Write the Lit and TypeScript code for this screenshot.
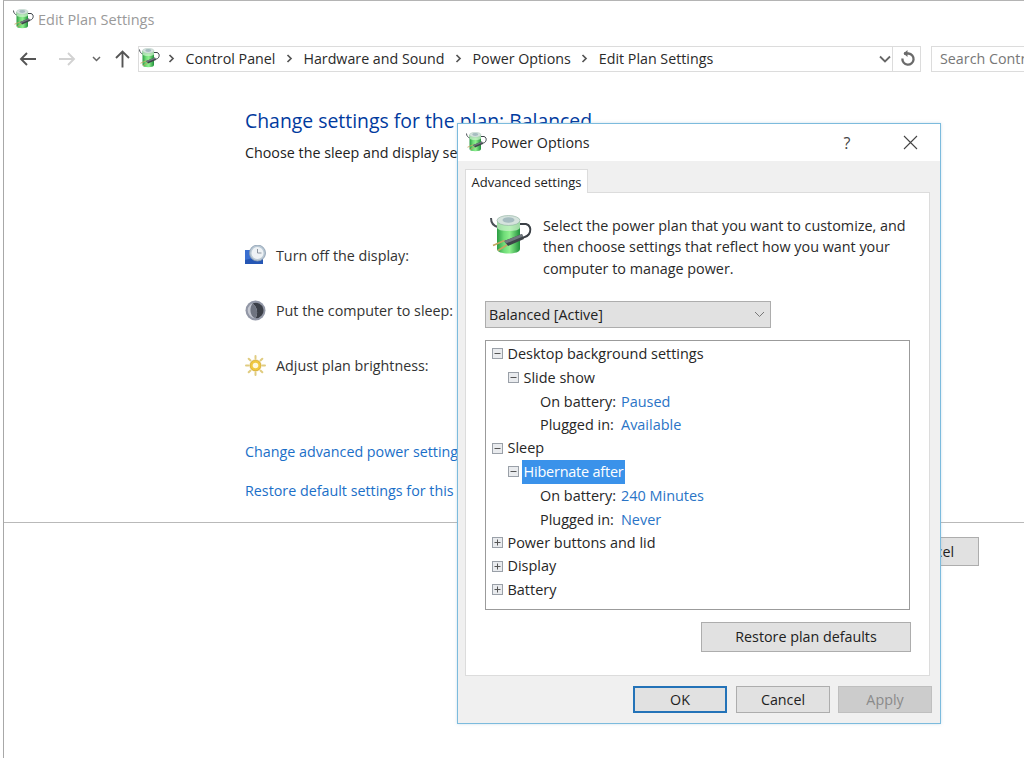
import { LitElement, html, css } from "lit";
import { customElement } from "lit/decorators.js";

let uid = 0;
const battery = (size: number) => {
  const id = `g${uid++}`;
  return html`<svg width=${size} height=${size} viewBox="0 0 42 42" class="ico">
    <defs>
      <linearGradient id=${id} x1="0" x2="1" y1="0" y2="0">
        <stop offset="0" stop-color="#2a9c42"/><stop offset=".3" stop-color="#6fdc78"/>
        <stop offset=".55" stop-color="#8ff08e"/><stop offset="1" stop-color="#1f8f3a"/>
      </linearGradient>
    </defs>
    <path d="M1 3C1 8 4 11 8 12" fill="none" stroke="#4a5056" stroke-width="2"/>
    <path d="M7 6v28c0 3 5 4.500 11.500 4.500S30 37 30 34V6z" fill="url(#${id})"/>
    <path d="M7 6v6c0 3 5 4 11.500 4S30 15 30 12V6z" fill="#c8f0c8" opacity=".75"/>
    <ellipse cx="18.500" cy="5.500" rx="11.500" ry="5" fill="#d5e3dd" stroke="#8fb0a0" stroke-width=".6"/>
    <ellipse cx="18.500" cy="5" rx="6" ry="2.800" fill="#a6bcc0"/>
    <path d="M30 9H36C40 10 41 14 40 17C39 21 36 22 31 23" fill="none" stroke="#3a4046" stroke-width="2"/>
    <path d="M32 19L34 24L18 31L14 26z" fill="#3e4449"/>
    <path d="M32 19L33 21.500L16 28.500L14 26z" fill="#70787e"/>
    <path d="M14.500 25.500L3 30.500M17 30L8 35.500" stroke="#c4a763" stroke-width="1.700"/>
  </svg>`;
};

const clock = html`<svg width="21" height="21" viewBox="0 0 21 21" class="ico">
  <path d="M0 5h18v14H0z" fill="#3a6fd0"/>
  <path d="M0 15L8 13L14 14L18 12V19H0z" fill="#2556b4"/>
  <circle cx="12.500" cy="8" r="8" fill="#b9c8d4" stroke="#8b9db0" stroke-width=".8"/>
  <circle cx="12.500" cy="8" r="6" fill="#eef2f5"/>
  <path d="M12.500 4v4h4" fill="none" stroke="#8c95a0" stroke-width="1"/>
</svg>`;
const moon = html`<svg width="21" height="21" viewBox="0 0 21 21" class="ico">
  <circle cx="10.500" cy="10.500" r="10" fill="#9297a6"/>
  <circle cx="10.500" cy="10.500" r="7.800" fill="#c4c7d0"/>
  <path d="M7.500 3.400a7.800 7.800 0 1 1 3 14.900C13 14 13 8 7.500 3.400z" fill="#3b3f47"/>
  <path d="M7.500 3.400C13 8 13 14 10.500 18.300C5 17 4 8 7.500 3.400z" fill="#6f7480"/>
</svg>`;
const sun = html`<svg width="21" height="21" viewBox="0 0 21 21" class="ico">
  <g stroke="#e0cc80" stroke-width="2" stroke-linecap="round">
    <path d="M10.500 1v2.500M10.500 17.500v2.500M1 10.500h2.500M17.500 10.500h2.500M3.700 3.700l1.800 1.800M15.500 15.500l1.800 1.800M3.700 17.300l1.800-1.800M15.500 5.500l1.800-1.800"/>
  </g>
  <circle cx="10.500" cy="10.500" r="5.500" fill="#f0c840" stroke="#cfa52e" stroke-width=".8"/>
  <circle cx="10.500" cy="10.500" r="2.800" fill="#fff8dc"/>
</svg>`;

const chev = html`<svg width="7" height="9" viewBox="0 0 7 9" class="crumb-sep"><path d="M1.500 1l3.500 3.500L1.500 8" fill="none" stroke="#555" stroke-width="1.700"/></svg>`;

type Row = { lvl: number; label?: string; value?: string; box?: "min" | "plus"; sel?: boolean };
const rows: Row[] = [
  { lvl: 0, box: "min", label: "Desktop background settings" },
  { lvl: 1, box: "min", label: "Slide show" },
  { lvl: 2, label: "On battery:", value: "Paused" },
  { lvl: 2, label: "Plugged in:", value: "Available" },
  { lvl: 0, box: "min", label: "Sleep" },
  { lvl: 1, box: "min", label: "Hibernate after", sel: true },
  { lvl: 2, label: "On battery:", value: "240 Minutes" },
  { lvl: 2, label: "Plugged in:", value: "Never" },
  { lvl: 0, box: "plus", label: "Power buttons and lid" },
  { lvl: 0, box: "plus", label: "Display" },
  { lvl: 0, box: "plus", label: "Battery" },
];

@customElement("app-root")
export class AppRoot extends LitElement {
  static styles = css`
    :host { display: block; width: 1024px; height: 758px; overflow: hidden; position: relative; background: #fff;
      font-family: "Open Sans", "Liberation Sans", sans-serif; font-size: 14.3px; color: #1e1e1e; }
    .ico { display: block; flex: none; }
    .win { margin-left: 3px; height: 758px; border-left: 1px solid #a8a8a8; border-top: 1px solid #b4b4b4; box-sizing: border-box; display: flex; flex-direction: column; overflow: hidden; }
    .title { height: 37px; display: flex; align-items: center; padding-left: 9px; gap: 4px; color: #9a9a9a; flex: none; font-size: 14.5px; }
    .nav { height: 27px; margin-top: 7px; display: flex; align-items: center; flex: none; }
    .nb { display: flex; align-items: center; justify-content: center; flex: none; }
    .n1 { width: 48px; } .n2 { width: 30px; } .n3 { width: 28px; } .n4 { width: 24px; }
    .addr { margin-left: 4px; width: 755px; height: 26px; border: 1px solid #dcdcdc; box-sizing: border-box; display: flex; align-items: center; flex: none; }
    .gap8 { width: 8px; flex: none; }
    .crumb { margin-right: 10.500px; white-space: nowrap; color: #2a2a2a; font-size: 14.250px; }
    .crumb-sep { margin-right: 10.500px; flex: none; }
    .addr .sp { flex: 1; }
    .dd { margin-right: 1px; }
    .refresh { width: 28px; height: 26px; border: 1px solid #dcdcdc; border-left: 0; box-sizing: border-box; display: flex; align-items: center; justify-content: center; padding-left: 3px; flex: none; }
    .search { margin-left: 10px; width: 120px; height: 26px; border: 1px solid #dcdcdc; box-sizing: border-box; display: flex; align-items: center; padding-left: 8px; color: #777; white-space: nowrap; overflow: hidden; flex: none; }
    .main { padding: 36px 0 0 241px; height: 450px; box-sizing: border-box; flex: none; }
    h1 { margin: 0; font-size: 19.400px; font-weight: 400; line-height: 26px; color: #003a9e; white-space: nowrap; }
    .sub { margin-top: 9px; line-height: 20px; white-space: nowrap; color: #222; }
    .opts { margin-top: 82px; display: flex; flex-direction: column; gap: 34px; }
    .opt { display: flex; align-items: center; gap: 10px; height: 21px; color: #333; white-space: nowrap; }
    .links { margin-top: 66px; display: flex; flex-direction: column; gap: 19px; color: #1b6fc8; white-space: nowrap; }
    .links div { line-height: 20px; }
    .foot { border-top: 1px solid #b9b9b9; flex: 1; display: flex; justify-content: flex-end; align-items: flex-start; padding: 14px 45px 0 0; gap: 8px; }
    .foot button { width: 94px; height: 29px; }
    button { font: inherit; color: #1e1e1e; background: #e1e1e1; border: 1px solid #adadad; box-sizing: border-box; padding: 0; }

    .dlg { position: absolute; left: 457px; top: 123px; width: 484px; height: 601px; box-sizing: border-box; border: 1px solid #7cbbdd; background: #f0f0f0; display: flex; flex-direction: column; box-shadow: 0 0 3px rgba(120,170,200,.35); }
    .dt { height: 37px; background: #fff; display: flex; align-items: center; padding-left: 8px; gap: 4px; flex: none; color: #262626; }
    .dt .sp { flex: 1; }
    .help { width: 58px; text-align: center; font-size: 16px; color: #444; }
    .close { width: 60px; display: flex; justify-content: center; }
    .tabs { padding: 8px 0 0 7px; height: 23px; display: flex; flex: none; }
    .tab { width: 123px; height: 24px; box-sizing: border-box; background: #fff; border: 1px solid #dcdcdc; border-bottom: 0; display: flex; align-items: center; justify-content: center; font-size: 13px; position: relative; z-index: 1; white-space: nowrap; color: #222; }
    .panel { margin: 0 10px 0 7px; flex: none; height: 484px; box-sizing: border-box; background: #fff; border: 1px solid #dcdcdc; padding: 22px 19px 0 19px; }
    .intro { display: flex; gap: 11px; margin-left: 5px; }
    .intro p { margin: 0; line-height: 21.300px; width: 376px; color: #2a2a2a; font-size: 14.360px; }
    .select { margin-top: 22px; width: 286px; height: 27px; box-sizing: border-box; background: #e1e1e1; border: 1px solid #adadad; display: flex; align-items: center; padding-left: 3px; justify-content: space-between; color: #222; }
    .select svg { margin-right: 5px; }
    .tree { margin-top: 12px; width: 425px; height: 270px; box-sizing: border-box; border: 1px solid #9b9b9b; padding: 1.200px 0 0 6px; font-size: 14.450px; }
    .row { height: 23.600px; display: flex; align-items: center; white-space: nowrap; color: #262626; }
    .l1 { padding-left: 16px; }
    .l2 { padding-left: 48px; }
    .box { width: 11px; height: 11px; flex: none; margin-right: 3px; }
    .lab { width: 81px; flex: none; }
    .val { color: #2a74c6; }
    .txt { padding: 0 1.500px; line-height: 23.600px; }
    .sel { background: #3a92ea; color: #fff; letter-spacing: -0.200px; }
    .r { display: flex; justify-content: flex-end; width: 426px; margin-top: 12px; }
    .r button { width: 210px; height: 30px; background: #e1e1e1; color: #222; }
    .btns { margin-top: 10px; display: flex; padding-left: 175px; }
    .btns button { width: 94px; height: 27px; }
    .btns .cx { margin-left: 9px; }
    .btns .dis { margin-left: 8px; background: #cccccc; color: #8a8a8a; border-color: #bfbfbf; }
    .ok { border: 2px solid #2473b8; }
  `;

  box(kind: "min" | "plus") {
    return html`<svg class="box" viewBox="0 0 11 11">
      <rect x=".5" y=".5" width="10" height="10" fill="#e9ebee" stroke="#9aa0a8"/>
      <path d=${kind === "min" ? "M2.500 5.500h6" : "M2.500 5.500h6M5.500 2.500v6"} stroke="#555" stroke-width="1"/>
    </svg>`;
  }

  render() {
    return html`
      <div class="win">
        <div class="title">${battery(21)}<span>Edit Plan Settings</span></div>
        <div class="nav">
          <div class="nb n1"><svg width="18" height="14" viewBox="0 0 18 14"><path d="M17 7H2M8 1L2 7l6 6" fill="none" stroke="#555" stroke-width="1.900"/></svg></div>
          <div class="nb n2"><svg width="18" height="14" viewBox="0 0 18 14"><path d="M1 7h15M10 1l6 6-6 6" fill="none" stroke="#d2d2d2" stroke-width="1.900"/></svg></div>
          <div class="nb n3"><svg width="9" height="6" viewBox="0 0 9 6"><path d="M1 1l3.500 3.500L8 1" fill="none" stroke="#666" stroke-width="1.500"/></svg></div>
          <div class="nb n4"><svg width="15" height="18" viewBox="0 0 15 18"><path d="M7.500 17.500V2M1 8l6.500-6.500L14 8" fill="none" stroke="#555" stroke-width="1.900"/></svg></div>
          <div class="addr">
            ${battery(21)}
            <span class="gap8"></span>${chev}
            <span class="crumb">Control Panel</span>${chev}
            <span class="crumb">Hardware and Sound</span>${chev}
            <span class="crumb">Power Options</span>${chev}
            <span class="crumb">Edit Plan Settings</span>
            <span class="sp"></span>
            <svg class="dd" width="12" height="8" viewBox="0 0 12 8"><path d="M1 1.500l5 5 5-5" fill="none" stroke="#666" stroke-width="1.800"/></svg>
          </div>
          <div class="refresh"><svg width="16" height="17" viewBox="0 0 16 17"><path d="M4 3.500h4.500a5.600 5.600 0 1 1-6.100 5" fill="none" stroke="#6a6a6a" stroke-width="2.300"/><path d="M7.500 0v7L3.500 3.500z" fill="#6a6a6a"/></svg></div>
          <div class="search">Search Control Panel</div>
        </div>
        <div class="main">
          <h1>Change settings for the plan: Balanced</h1>
          <div class="sub">Choose the sleep and display settings that you want your computer to use.</div>
          <div class="opts">
            <div class="opt">${clock}<span>Turn off the display:</span></div>
            <div class="opt">${moon}<span>Put the computer to sleep:</span></div>
            <div class="opt">${sun}<span>Adjust plan brightness:</span></div>
          </div>
          <div class="links">
            <div>Change advanced power settings</div>
            <div>Restore default settings for this plan</div>
          </div>
        </div>
        <div class="foot"><button>Save changes</button><button>Cancel</button></div>
      </div>

      <div class="dlg">
        <div class="dt">${battery(21)}<span>Power Options</span><span class="sp"></span>
          <span class="help">?</span>
          <span class="close"><svg width="15" height="15" viewBox="0 0 15 15"><path d="M1 1l13 13M14 1L1 14" stroke="#444" stroke-width="1.100"/></svg></span>
        </div>
        <div class="tabs"><div class="tab">Advanced settings</div></div>
        <div class="panel">
          <div class="intro">${battery(42)}<p>Select the power plan that you want to customize, and then choose settings that reflect how you want your computer to manage power.</p></div>
          <div class="select"><span>Balanced [Active]</span><svg width="11" height="7" viewBox="0 0 11 7"><path d="M1 1l4.500 4.500L10 1" fill="none" stroke="#777" stroke-width="1"/></svg></div>
          <div class="tree">
            ${rows.map((r) => html`<div class="row l${r.lvl}">
              ${r.box ? this.box(r.box) : ""}
              ${r.value
                ? html`<span class="lab">${r.label}</span><span class="val">${r.value}</span>`
                : html`<span class="txt ${r.sel ? "sel" : ""}">${r.label}</span>`}
            </div>`)}
          </div>
          <div class="r"><button>Restore plan defaults</button></div>
        </div>
        <div class="btns"><button class="ok">OK</button><button class="cx">Cancel</button><button class="dis">Apply</button></div>
      </div>`;
  }
}
